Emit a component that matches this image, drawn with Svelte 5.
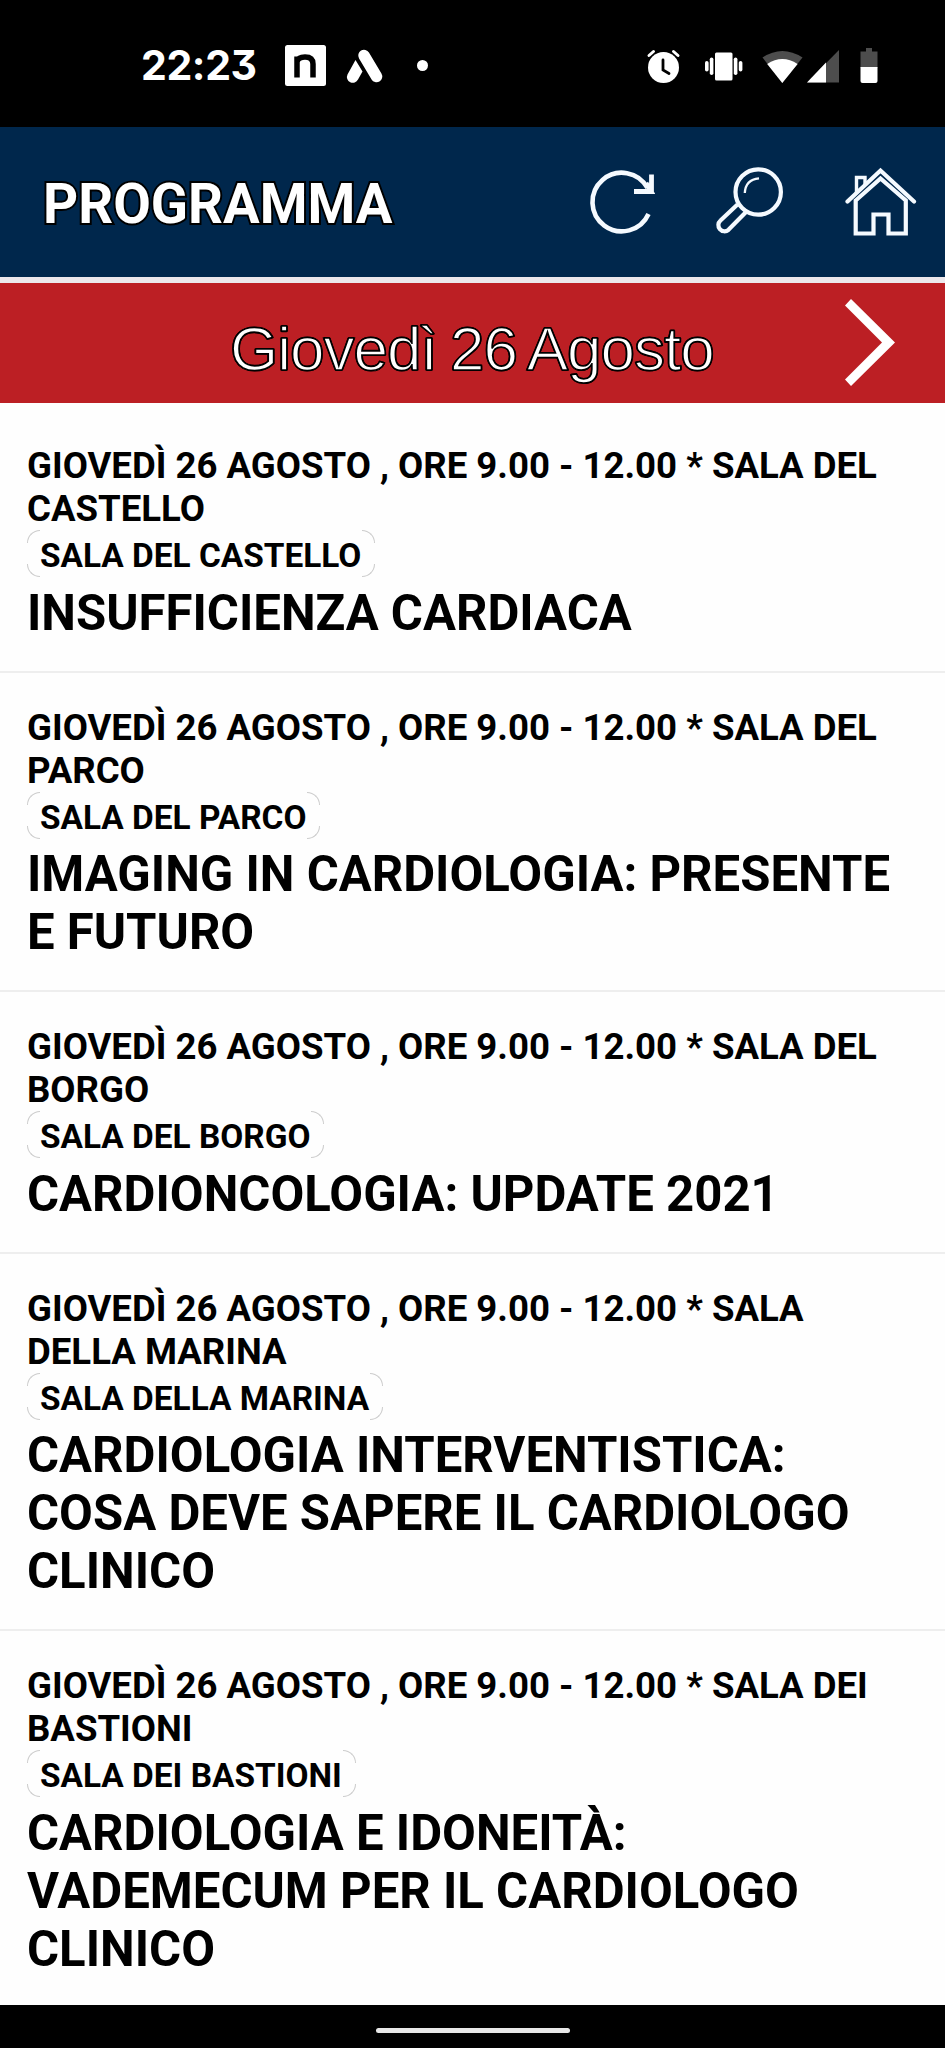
<script>
	let day = 'Giovedì 26 Agosto';

	let sessions = [
		{
			time: 'GIOVEDÌ 26 AGOSTO , ORE 9.00 - 12.00 * SALA DEL CASTELLO',
			room: 'SALA DEL CASTELLO',
			title: 'INSUFFICIENZA CARDIACA'
		},
		{
			time: 'GIOVEDÌ 26 AGOSTO , ORE 9.00 - 12.00 * SALA DEL PARCO',
			room: 'SALA DEL PARCO',
			title: 'IMAGING IN CARDIOLOGIA: PRESENTE E FUTURO'
		},
		{
			time: 'GIOVEDÌ 26 AGOSTO , ORE 9.00 - 12.00 * SALA DEL BORGO',
			room: 'SALA DEL BORGO',
			title: 'CARDIONCOLOGIA: UPDATE 2021'
		},
		{
			time: 'GIOVEDÌ 26 AGOSTO , ORE 9.00 - 12.00 * SALA DELLA MARINA',
			room: 'SALA DELLA MARINA',
			title: 'CARDIOLOGIA INTERVENTISTICA: COSA DEVE SAPERE IL CARDIOLOGO CLINICO'
		},
		{
			time: 'GIOVEDÌ 26 AGOSTO , ORE 9.00 - 12.00 * SALA DEI BASTIONI',
			room: 'SALA DEI BASTIONI',
			title: 'CARDIOLOGIA E IDONEITÀ: VADEMECUM PER IL CARDIOLOGO CLINICO'
		}
	];
</script>

<div class="screen">
	<div class="status">
		<span class="clock">22:23</span>
		<svg class="notifications" width="150" height="50" viewBox="280 40 150 50">
			<rect x="285" y="45" width="41" height="41" rx="2.5" fill="#fff" />
			<path d="M297 77.500V56.500M297 62q1-5 8-5q8 0 8 7v13.500" fill="none" stroke="#000" stroke-width="5.5" />
			<path d="M364 55.500L376.500 76.500" stroke="#fff" stroke-width="11.500" stroke-linecap="round" />
			<path d="M355.500 60L362.500 71.500L358 79.500A5.800 5.800 0 0 1 347.500 74.500Z" fill="#fff" />
			<circle cx="422.500" cy="65.500" r="5.500" fill="#fff" />
		</svg>
		<svg class="system" width="240" height="50" viewBox="640 40 240 50">
			<circle cx="663.500" cy="67.500" r="15.500" fill="#fff" />
			<path d="M663 60v10l6 3.500" fill="none" stroke="#000" stroke-width="2.800" stroke-linecap="round" />
			<path d="M649 55.500L653.500 51.500M678 55.500L673.500 51.500" stroke="#fff" stroke-width="3" stroke-linecap="round" />
			<g fill="#fff">
				<rect x="715" y="52.500" width="17.500" height="28" rx="1.500" />
				<rect x="709.800" y="57.500" width="3.600" height="17.500" rx="1.800" />
				<rect x="705" y="61" width="3.600" height="10.500" rx="1.800" />
				<rect x="733.800" y="57.500" width="3.600" height="17.500" rx="1.800" />
				<rect x="738.800" y="61" width="3.600" height="10.500" rx="1.800" />
			</g>
			<path d="M782.300 83L762.500 57.500Q782.300 44.500 802.500 57.500Z" fill="#4d4d4d" />
			<path d="M782.300 83L767.200 64Q782.300 54 797.600 64Z" fill="#fff" />
			<path d="M839 50V82.500H807Z" fill="#4d4d4d" />
			<path d="M826 62.500V82.500H807Z" fill="#fff" />
			<path d="M866 48h6v3.500h5.500V68H860.500V51.500H866Z" fill="#4d4d4d" />
			<path d="M860.500 67H877.500V81q0 2-2 2h-13q-2 0-2-2Z" fill="#fff" />
		</svg>
	</div>

	<div class="header">
		<h1>PROGRAMMA</h1>
		<div class="actions">
			<svg width="66" height="70" viewBox="588 167 66 70">
				<path d="M646.500 188A29.300 29.300 0 1 0 647.500 214" fill="none" stroke="#f5faff" stroke-width="4.600" />
				<path d="M650.500 174.500V191.500H633M636 191.500H650L645 183" fill="none" stroke="#f5faff" stroke-width="4.800" />
			</svg>
			<svg width="70" height="70" viewBox="716 166 70 70">
				<g fill="none" stroke="#f5faff" stroke-width="4.200">
					<circle cx="759.200" cy="191" r="22.700" />
					<path d="M738.500 203.500L721.500 219.500A5.400 5.400 0 0 0 729.500 228.800L747.500 210.500" />
					<path d="M745.800 192Q746.500 178.500 760 177.300" stroke-width="2.300" />
				</g>
			</svg>
			<svg width="72" height="72" viewBox="845 166 72 72">
				<g fill="none" stroke="#f5faff" stroke-width="4.200">
					<path d="M847.500 201.500L880.500 170.500L914 201.500" stroke-linecap="round" />
					<path d="M856.500 193V177.500H865V184" stroke-width="3.400" />
					<path d="M855.700 200.500L880.500 178.500L905.800 200.500V233.500H888.500V214.500H873.500V233.500H855.700Z" />
				</g>
			</svg>
		</div>
	</div>

	<div class="day">
		<span class="day-name">{day}</span>
		<svg class="next" width="52" height="90" viewBox="844 298 52 90">
			<path d="M851 299L895 342.500L851 386L845 379.500L882 342.500L845 305.500Z" fill="#fff" />
		</svg>
	</div>

	<div class="sessions">
		{#each sessions as session}
			<div class="session">
				<div class="time">{session.time}</div>
				<div class="room">
					<span>{session.room}</span>
					<i class="corner tl"></i>
					<i class="corner tr"></i>
					<i class="corner bl"></i>
					<i class="corner br"></i>
				</div>
				<h2>{session.title}</h2>
			</div>
		{/each}
	</div>

	<div class="navbar">
		<div class="handle"></div>
	</div>
</div>

<style>
	:global(body) {
		margin: 0;
		background: #000;
	}

	.screen {
		width: 945px;
		height: 2048px;
		display: flex;
		flex-direction: column;
		overflow: hidden;
		background: #fefefe;
		color: #000;
		font-family: Roboto, sans-serif;
	}

	.status {
		flex: none;
		height: 127px;
		box-sizing: border-box;
		padding: 40px 65px 0 141px;
		display: flex;
		align-items: flex-start;
		background: #000;
	}

	.clock {
		width: 139px;
		color: #fff;
		font-family: Inter, sans-serif;
		font-size: 41px;
		font-weight: 700;
		line-height: 50px;
		letter-spacing: -0.4px;
		font-feature-settings: 'cv09';
		white-space: nowrap;
	}

	.system {
		margin-left: auto;
	}

	.header {
		flex: none;
		height: 156px;
		box-sizing: border-box;
		border-bottom: 6px solid #ece8ec;
		padding: 0 28px 0 43px;
		display: flex;
		align-items: center;
		justify-content: space-between;
		background: #00274c;
	}

	h1 {
		margin: 4px 0 0;
		color: #fff;
		font-size: 54.6px;
		font-weight: 700;
		line-height: 64px;
		-webkit-text-stroke: 4px #000;
		paint-order: stroke fill;
	}

	.actions {
		display: flex;
		align-items: center;
		gap: 60px;
	}

	.day {
		flex: none;
		height: 120px;
		box-sizing: border-box;
		padding: 0 49px 0 230px;
		display: flex;
		align-items: center;
		justify-content: space-between;
		background: #bc1f24;
	}

	/* the stroke thins the letters, the shadows widen the outline around them */
	.day-name {
		padding-top: 11px;
		color: #fff;
		font-family: 'Liberation Sans', Arial, sans-serif;
		font-size: 62px;
		line-height: 70px;
		letter-spacing: -1px;
		word-spacing: -3px;
		-webkit-text-stroke: 1.6px #000;
		text-shadow: 1px 0 #000, -1px 0 #000, 0 1px #000, 0 -1px #000;
		white-space: nowrap;
	}

	.sessions {
		flex: 1;
		min-height: 0;
		overflow: hidden;
		padding-top: 8px;
	}

	.session {
		padding: 33px 28px 29px 27px;
		border-bottom: 2px solid #eee;
	}

	.session:last-child {
		border-bottom: none;
	}

	.time {
		font-size: 36.6px;
		font-weight: 700;
		line-height: 43px;
	}

	.room {
		position: relative;
		width: fit-content;
		height: 47px;
		padding: 0 14px 0 13px;
		font-size: 33.4px;
		font-weight: 700;
		line-height: 51px;
		white-space: nowrap;
	}

	.corner {
		position: absolute;
		width: 12px;
		height: 12px;
		border: 0 solid #ccc;
	}

	.tl {
		top: 0;
		left: 0;
		border-width: 1px 0 0 1px;
		border-top-left-radius: 13px;
	}

	.tr {
		top: 0;
		right: 0;
		border-width: 1px 1px 0 0;
		border-top-right-radius: 13px;
	}

	.bl {
		bottom: 0;
		left: 0;
		border-width: 0 0 1px 1px;
		border-bottom-left-radius: 13px;
	}

	.br {
		bottom: 0;
		right: 0;
		border-width: 0 1px 1px 0;
		border-bottom-right-radius: 13px;
	}

	h2 {
		margin: 6.5px 0 0;
		font-size: 49.1px;
		font-weight: 700;
		line-height: 58px;
	}

	.navbar {
		flex: none;
		height: 43px;
		display: flex;
		justify-content: center;
		align-items: center;
		background: #000;
	}

	.handle {
		width: 194px;
		height: 5px;
		margin-top: 7px;
		border-radius: 3px;
		background: #e8e8e8;
	}
</style>
